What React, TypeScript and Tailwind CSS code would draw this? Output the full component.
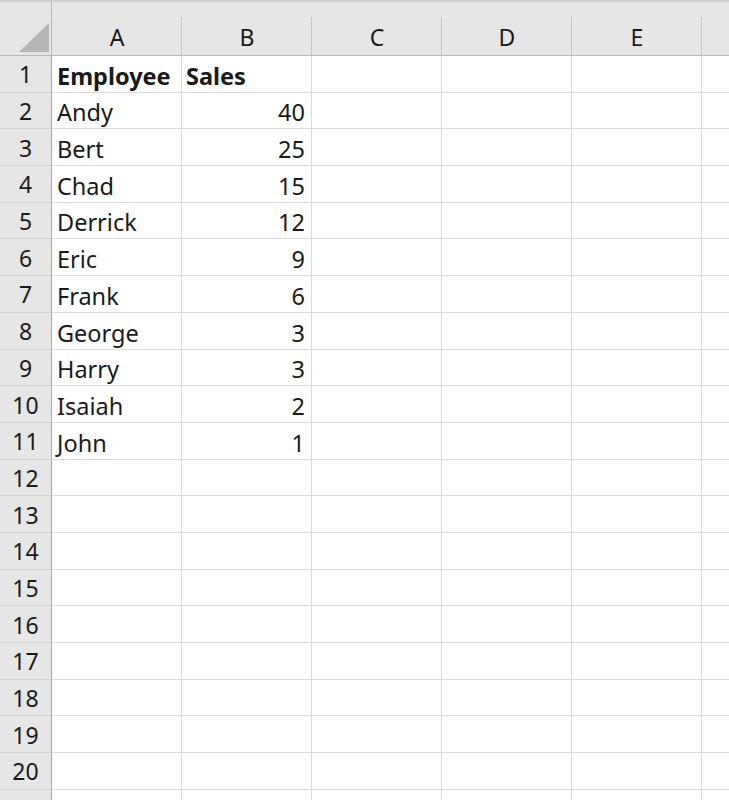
const cols = ["A", "B", "C", "D", "E"];

const data: [string, string][] = [
  ["Andy", "40"],
  ["Bert", "25"],
  ["Chad", "15"],
  ["Derrick", "12"],
  ["Eric", "9"],
  ["Frank", "6"],
  ["George", "3"],
  ["Harry", "3"],
  ["Isaiah", "2"],
  ["John", "1"],
];

const rowNums = Array.from({ length: 21 }, (_, i) => i + 1);

export default function App() {
  return (
    <div
      className="w-[729px] h-[800px] overflow-hidden bg-white text-[#1a1a1a]"
      style={{ fontFamily: '"Noto Sans", "Open Sans", sans-serif' }}
    >
      {/* column header strip */}
      <div className="h-[56px] bg-[#e6e6e6] border-t-2 border-t-[#cfcfcf] border-b border-b-[#b9b9b9] flex">
        <div className="w-[52px] shrink-0 h-full border-r border-r-[#b9b9b9] flex items-end justify-end pr-[2px] pb-[3px]">
          <svg width="30" height="29" viewBox="0 0 30 29">
            <polygon points="30,0 30,29 0,29" fill="#b6b6b6" />
          </svg>
        </div>
        {cols.map((c) => (
          <div
            key={c}
            className="w-[130px] shrink-0 h-full flex items-end justify-center pb-[3px] text-[23px] leading-[30px] relative"
          >
            {c}
            <span className="absolute right-0 bottom-0 h-[38px] w-px bg-[#c6c6c6]" />
          </div>
        ))}
        <div className="flex-1" />
      </div>

      {/* rows */}
      {rowNums.map((n) => {
        const isHead = n === 1;
        const rec = n >= 2 && n <= 11 ? data[n - 2] : null;
        return (
          <div key={n} className="h-[36.7px] flex">
            <div className="w-[52px] shrink-0 bg-[#e6e6e6] border-r border-r-[#a8a8a8] border-b border-b-[#d4d4d4] flex items-center justify-center pt-[2px] text-[23px] leading-none">
              {n <= 20 ? n : ""}
            </div>
            <div
              className={`w-[130px] shrink-0 border-r border-b border-[#dcdcdc] flex items-end pl-[5px] pb-[1px] text-[23.5px] leading-[30px] ${
                isHead ? "font-bold" : ""
              }`}
            >
              {isHead ? "Employee" : rec ? rec[0] : ""}
            </div>
            <div
              className={`w-[130px] shrink-0 border-r border-b border-[#dcdcdc] flex items-end pb-[1px] text-[23.5px] leading-[30px] ${
                isHead ? "font-bold justify-start pl-[4px]" : "justify-end pr-[6px]"
              }`}
            >
              {isHead ? "Sales" : rec ? rec[1] : ""}
            </div>
            {[0, 1, 2].map((k) => (
              <div key={k} className="w-[130px] shrink-0 border-r border-b border-[#dcdcdc]" />
            ))}
            <div className="flex-1 border-b border-[#dcdcdc]" />
          </div>
        );
      })}
    </div>
  );
}
